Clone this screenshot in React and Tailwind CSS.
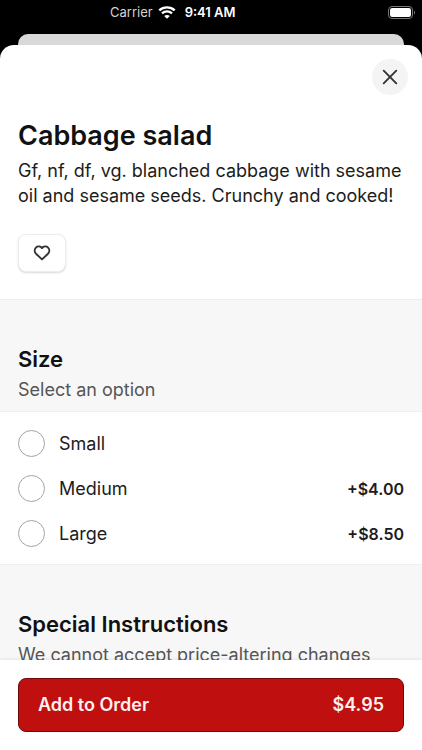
import React from "react";

const sizes = [
  { id: "small", label: "Small", price: "" },
  { id: "medium", label: "Medium", price: "+$4.00" },
  { id: "large", label: "Large", price: "+$8.50" },
];

function StatusBar() {
  return (
    <header className="flex h-[34px] shrink-0 items-start text-[13px] leading-6 text-white">
      <div className="flex w-full items-center pl-[110px]">
        <span className="text-neutral-300">Carrier</span>
        <svg className="ml-[5px] h-[13px] w-[18px]" viewBox="0 0 18 13" fill="none" aria-hidden="true">
          <path d="M1.3 4.4C5.6 0.4 12.4 0.4 16.7 4.4" stroke="#fff" strokeWidth="2.4" />
          <path d="M4 7.4C6.8 4.8 11.2 4.8 14 7.4" stroke="#fff" strokeWidth="2.2" />
          <path d="M9 12.8L6.2 10C7.8 8.5 10.2 8.5 11.8 10Z" fill="#fff" />
        </svg>
        <span className="ml-[9px] font-semibold">9:41 AM</span>
        <svg className="mr-1.5 ml-auto h-[13px] w-[28px]" viewBox="0 0 28 13" aria-hidden="true">
          <rect x="0.5" y="0.5" width="24" height="12" rx="3.5" fill="none" stroke="#777" />
          <rect x="2" y="2" width="21" height="9" rx="2.2" fill="#fff" />
          <path d="M26 4.5C27.4 5 27.4 8 26 8.5Z" fill="#777" />
        </svg>
      </div>
    </header>
  );
}

function SectionHeading({ id, title, hint }) {
  return (
    <div className="bg-[#f7f7f7] px-[18px] pt-[42px] pb-[7px]">
      <h2 id={id} className="text-[22px] leading-[34px] font-semibold text-[#111]">{title}</h2>
      <p className="text-lg leading-7 whitespace-nowrap text-[#555]">{hint}</p>
    </div>
  );
}

export default function App() {
  return (
    <div className="flex h-dvh flex-col overflow-hidden bg-black font-['Inter',sans-serif]">
      <StatusBar />
      <div className="mx-[18px] h-[11px] shrink-0 rounded-t-[10px] bg-[#d9d9d9]" />
      <main className="flex min-h-0 flex-1 flex-col overflow-hidden rounded-t-[14px] bg-white">
        <div className="min-h-0 flex-1 overflow-hidden">
          <div className="flex justify-end px-3.5 pt-3.5">
            <button type="button" aria-label="Close" className="flex size-9 items-center justify-center rounded-full bg-[#f4f4f4]">
              <svg className="size-4" viewBox="0 0 16 16" fill="none" stroke="#333" strokeWidth="1.9" strokeLinecap="round" aria-hidden="true">
                <path d="M1.7 1.7L14.3 14.3M14.3 1.7L1.7 14.3" />
              </svg>
            </button>
          </div>
          <section className="border-b border-[#ededed] px-[18px] pt-[23px] pb-[27px]">
            <h1 className="text-[27px] leading-9 font-semibold text-[#111]">Cabbage salad</h1>
            <p className="mt-1 text-lg leading-[25px] text-[#1c1c1c]">
              Gf, nf, df, vg. blanched cabbage with sesame oil and sesame seeds. Crunchy and cooked!
            </p>
            <button type="button" aria-label="Save to favorites" className="mt-[26px] flex h-[38px] w-12 items-center justify-center rounded-lg border border-[#ececec] bg-white shadow-[0_1px_2px_rgba(0,0,0,0.15)]">
              <svg className="size-[18px]" viewBox="0 0 18 18" fill="none" stroke="#333" strokeWidth="1.9" strokeLinejoin="round" aria-hidden="true">
                <path d="M9 4.1C7.6 2.1 4.6 1.8 2.9 3.6C1.2 5.4 1.4 8 3 9.7L9 15.4L15 9.7C16.6 8 16.8 5.4 15.1 3.6C13.4 1.8 10.4 2.1 9 4.1Z" />
              </svg>
            </button>
          </section>
          <SectionHeading id="size-heading" title="Size" hint="Select an option" />
          <fieldset aria-labelledby="size-heading" className="border-y border-[#efefef] bg-white px-[18px] pt-[9px] pb-2">
            {sizes.map(({ id, label, price }) => (
              <label key={id} htmlFor={id} className="flex h-[45px] items-center">
                <input id={id} type="radio" name="size" value={id} className="size-[27px] appearance-none rounded-full border border-[#a3a3a3] bg-white checked:border-8 checked:border-[#c00f0f]" />
                <span className="ml-3.5 text-lg text-[#1c1c1c]">{label}</span>
                <span className="ml-auto text-base font-semibold text-[#1c1c1c]">{price}</span>
              </label>
            ))}
          </fieldset>
          <SectionHeading id="instructions-heading" title="Special Instructions" hint="We cannot accept price-altering changes" />
        </div>
        <footer className="relative bg-white p-[18px] shadow-[0_-1px_3px_rgba(0,0,0,0.08)]">
          <button type="button" className="flex h-[54px] w-full items-center justify-between rounded-lg border border-[#6b0c0c] bg-[#c00f0f] px-[19px] text-lg font-semibold text-[#fff0f0]">
            <span>Add to Order</span>
            <span>$4.95</span>
          </button>
        </footer>
      </main>
    </div>
  );
}
